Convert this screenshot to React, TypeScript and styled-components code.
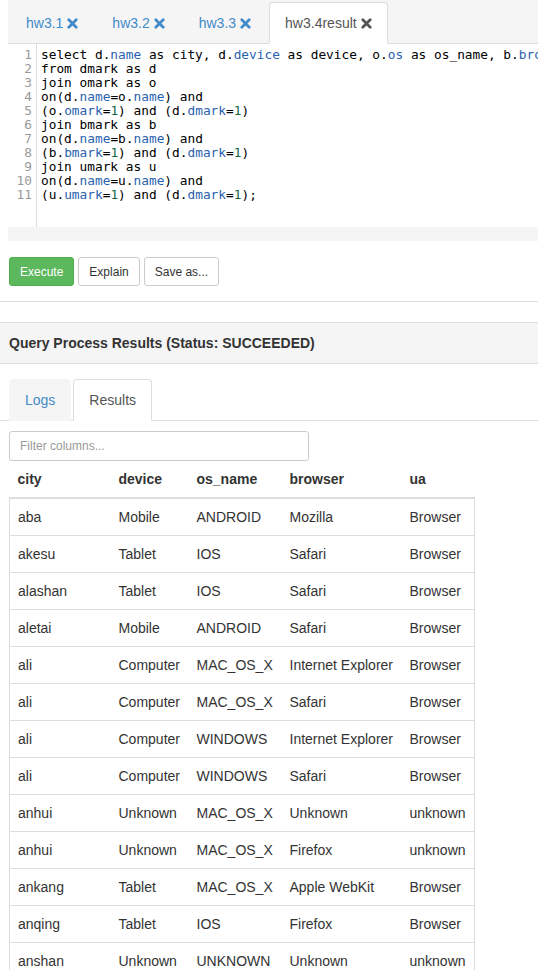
import styled, { createGlobalStyle } from 'styled-components';

const GlobalStyle = createGlobalStyle`
  html, body {
    margin: 0;
    padding: 0;
    background: #fff;
  }
  body {
    font-family: "Liberation Sans", Arial, sans-serif;
    font-size: 14px;
    line-height: 20px;
    color: #333;
  }
  * {
    box-sizing: border-box;
  }
`;

const QUERY_TABS = ['hw3.1', 'hw3.2', 'hw3.3', 'hw3.4result'];
const ACTIVE_QUERY = 'hw3.4result';

const CODE_LINES = [
  'select d.name as city, d.device as device, o.os as os_name, b.browser as browser, u.ua as ua',
  'from dmark as d',
  'join omark as o',
  'on(d.name=o.name) and',
  '(o.omark=1) and (d.dmark=1)',
  'join bmark as b',
  'on(d.name=b.name) and',
  '(b.bmark=1) and (d.dmark=1)',
  'join umark as u',
  'on(d.name=u.name) and',
  '(u.umark=1) and (d.dmark=1);',
];

const COLUMNS = [
  { key: 'city', width: 101 },
  { key: 'device', width: 78 },
  { key: 'os_name', width: 93 },
  { key: 'browser', width: 120 },
  { key: 'ua', width: 73 },
];

const ROWS = [
  ['aba', 'Mobile', 'ANDROID', 'Mozilla', 'Browser'],
  ['akesu', 'Tablet', 'IOS', 'Safari', 'Browser'],
  ['alashan', 'Tablet', 'IOS', 'Safari', 'Browser'],
  ['aletai', 'Mobile', 'ANDROID', 'Safari', 'Browser'],
  ['ali', 'Computer', 'MAC_OS_X', 'Internet Explorer', 'Browser'],
  ['ali', 'Computer', 'MAC_OS_X', 'Safari', 'Browser'],
  ['ali', 'Computer', 'WINDOWS', 'Internet Explorer', 'Browser'],
  ['ali', 'Computer', 'WINDOWS', 'Safari', 'Browser'],
  ['anhui', 'Unknown', 'MAC_OS_X', 'Unknown', 'unknown'],
  ['anhui', 'Unknown', 'MAC_OS_X', 'Firefox', 'unknown'],
  ['ankang', 'Tablet', 'MAC_OS_X', 'Apple WebKit', 'Browser'],
  ['anqing', 'Tablet', 'IOS', 'Firefox', 'Browser'],
  ['anshan', 'Unknown', 'UNKNOWN', 'Unknown', 'unknown'],
];

// split a line into plain / property / number tokens
const tokenize = (line: string) => {
  const parts: { text: string; kind: 'plain' | 'prop' | 'num' }[] = [];
  const re = /\.([a-z_]+)|(\d+)/g;
  let last = 0;
  let m: RegExpExecArray | null;
  while ((m = re.exec(line))) {
    if (m.index > last) parts.push({ text: line.slice(last, m.index), kind: 'plain' });
    if (m[1]) {
      parts.push({ text: '.', kind: 'plain' });
      parts.push({ text: m[1], kind: 'prop' });
    } else {
      parts.push({ text: m[2], kind: 'num' });
    }
    last = re.lastIndex;
  }
  if (last < line.length) parts.push({ text: line.slice(last), kind: 'plain' });
  return parts;
};

const CloseIcon = ({ color }: { color: string }) => (
  <svg width="11" height="11" viewBox="0 0 11 11" aria-hidden="true">
    <path
      d="M1.8 1.8 L9.2 9.2 M9.2 1.8 L1.8 9.2"
      stroke={color}
      strokeWidth="2.8"
      strokeLinecap="round"
    />
  </svg>
);

const App = () => {
  return (
    <Page>
      <GlobalStyle />
      <EditorWell>
        <QueryTabs>
          {QUERY_TABS.map((name) => {
            const active = name === ACTIVE_QUERY;
            return (
              <QueryTab key={name} $active={active}>
                {name}
                <CloseIcon color={active ? '#555' : '#428bca'} />
              </QueryTab>
            );
          })}
        </QueryTabs>
        <Editor>
          <Gutter>
            {CODE_LINES.map((_, i) => (
              <LineNumber key={i}>{i + 1}</LineNumber>
            ))}
          </Gutter>
          <Code>
            {CODE_LINES.map((line, i) => (
              <CodeLine key={i}>
                {tokenize(line).map((t, j) => (
                  <Token key={j} $kind={t.kind}>
                    {t.text}
                  </Token>
                ))}
              </CodeLine>
            ))}
          </Code>
        </Editor>
      </EditorWell>

      <Actions>
        <Button $variant="success">Execute</Button>
        <Button>Explain</Button>
        <Button>Save as...</Button>
      </Actions>

      <Divider />

      <PanelHeading>Query Process Results (Status: SUCCEEDED)</PanelHeading>

      <ResultTabs>
        <ResultTab>Logs</ResultTab>
        <ResultTab $active>Results</ResultTab>
      </ResultTabs>

      <FilterInput placeholder="Filter columns..." />

      <ResultTable>
        <thead>
          <tr>
            {COLUMNS.map((c) => (
              <Th key={c.key} $width={c.width}>
                {c.key}
              </Th>
            ))}
          </tr>
        </thead>
        <tbody>
          {ROWS.map((row, i) => (
            <tr key={i}>
              {row.map((cell, j) => (
                <Td key={j}>{cell}</Td>
              ))}
            </tr>
          ))}
        </tbody>
      </ResultTable>
    </Page>
  );
};

const Page = styled.div`
  width: 538px;
  overflow: hidden;
`;

const EditorWell = styled.div`
  margin-left: 8px;
  padding-bottom: 14px;
  background: #f5f5f5;
`;

const QueryTabs = styled.ul`
  display: flex;
  margin: 0;
  padding: 2px 0 0 2px;
  list-style: none;
  border-bottom: 1px solid #ddd;
`;

const QueryTab = styled.li<{ $active?: boolean }>`
  display: flex;
  align-items: center;
  gap: 4px;
  margin: 0 2px -1px 0;
  padding: 10px 15px;
  border: 1px solid ${({ $active }) => ($active ? '#ddd' : 'transparent')};
  border-bottom-color: ${({ $active }) => ($active ? '#fff' : 'transparent')};
  border-radius: 4px 4px 0 0;
  background: ${({ $active }) => ($active ? '#fff' : 'transparent')};
  color: ${({ $active }) => ($active ? '#555' : '#428bca')};
  white-space: nowrap;
`;

const Editor = styled.div`
  display: flex;
  height: 183px;
  background: #fff;
  overflow: hidden;
`;

const Gutter = styled.div`
  flex: 0 0 29px;
  padding: 4px 4px 0 0;
  border-right: 1px solid #ddd;
  background: #fff;
  text-align: right;
`;

const LineNumber = styled.div`
  font-family: "DejaVu Sans Mono", "Liberation Mono", monospace;
  font-size: 12.8px;
  line-height: 14px;
  color: #999;
`;

const Code = styled.div`
  padding: 4px 0 0 4px;
  font-family: "DejaVu Sans Mono", "Liberation Mono", monospace;
  font-size: 12.8px;
  line-height: 14px;
  color: #000;
  white-space: pre;
`;

const CodeLine = styled.div`
  height: 14px;
`;

const Token = styled.span<{ $kind: 'plain' | 'prop' | 'num' }>`
  color: ${({ $kind }) =>
    $kind === 'prop' ? '#2a62b0' : $kind === 'num' ? '#116644' : '#000'};
`;

const Actions = styled.div`
  display: flex;
  gap: 4px;
  margin: 16px 0 0 9px;
`;

const Button = styled.button<{ $variant?: 'success' }>`
  height: 29px;
  padding: 0 10px;
  font-family: "Liberation Sans", Arial, sans-serif;
  font-size: 12px;
  border-radius: 3px;
  border: 1px solid ${({ $variant }) => ($variant === 'success' ? '#4cae4c' : '#ccc')};
  background: ${({ $variant }) => ($variant === 'success' ? '#5cb85c' : '#fff')};
  color: ${({ $variant }) => ($variant === 'success' ? '#fff' : '#333')};
`;

const Divider = styled.hr`
  margin: 15px 0 0;
  border: none;
  border-top: 1px solid #ddd;
`;

const PanelHeading = styled.div`
  margin-top: 20px;
  padding: 10px 9px;
  height: 42px;
  line-height: 20px;
  background: #f5f5f5;
  border-top: 1px solid #ddd;
  border-bottom: 1px solid #ddd;
  font-weight: bold;
  color: #333;
`;

const ResultTabs = styled.ul`
  display: flex;
  margin: 15px 0 0;
  padding: 0 0 0 9px;
  list-style: none;
  border-bottom: 1px solid #ddd;
`;

const ResultTab = styled.li<{ $active?: boolean }>`
  margin: 0 2px -1px 0;
  padding: 10px 15px;
  border: 1px solid ${({ $active }) => ($active ? '#ddd' : 'transparent')};
  border-bottom-color: ${({ $active }) => ($active ? '#fff' : 'transparent')};
  border-radius: 4px 4px 0 0;
  background: ${({ $active }) => ($active ? '#fff' : '#f5f5f5')};
  color: ${({ $active }) => ($active ? '#555' : '#428bca')};
`;

const FilterInput = styled.input`
  display: block;
  width: 300px;
  height: 30px;
  margin: 10px 0 0 9px;
  padding: 5px 10px;
  font-family: "Liberation Sans", Arial, sans-serif;
  font-size: 12px;
  color: #555;
  border: 1px solid #ccc;
  border-radius: 3px;
  outline: none;

  &::placeholder {
    color: #999;
  }
`;

const ResultTable = styled.table`
  margin: 0 0 0 9px;
  width: 465px;
  table-layout: fixed;
  border-collapse: collapse;
  border-spacing: 0;
`;

const Th = styled.th<{ $width: number }>`
  width: ${({ $width }) => $width}px;
  padding: 8px;
  text-align: left;
  font-weight: bold;
  border-bottom: 2px solid #ddd;
  white-space: nowrap;
`;

const Td = styled.td`
  padding: 8px;
  border-top: 1px solid #ddd;
  white-space: nowrap;

  &:first-child {
    border-left: 1px solid #ddd;
  }

  &:last-child {
    border-right: 1px solid #ddd;
  }
`;

export default App;
